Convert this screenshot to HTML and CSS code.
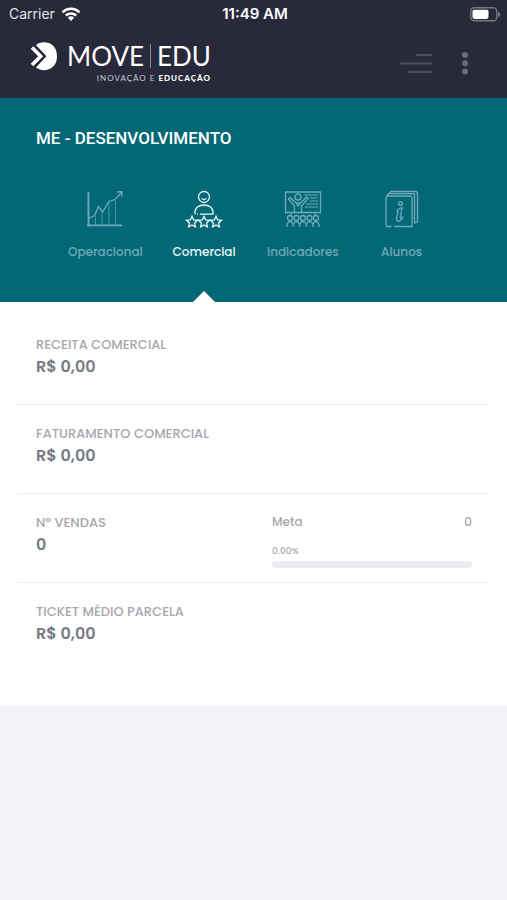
FILE: index.html
```html
<!DOCTYPE html>
<html lang="pt-BR">
<head>
<meta charset="utf-8">
<meta name="viewport" content="width=device-width, initial-scale=1">
<title>Move Edu</title>
<link rel="stylesheet" href="styles.css">
</head>
<body>
<div class="status">
  <div class="carrier">Carrier
    <svg width="20" height="14" viewBox="0 0 20 14" fill="none" stroke="#fff" stroke-width="2.5"><path d="M1.500 5.300a12.200 12.200 0 0 1 17 0M4.800 8.500a7.500 7.500 0 0 1 10.400 0"/><path d="M10 14 6.900 10.800a4.500 4.500 0 0 1 6.200 0z" fill="#fff" stroke="none"/></svg>
  </div>
  <time class="clock">11:49 AM</time>
  <svg class="battery" width="31" height="15" viewBox="0 0 31 15"><rect x=".75" y=".75" width="26" height="13" rx="3.5" fill="none" stroke="#777684" stroke-width="1.3"/><rect x="2.5" y="2.7" width="16" height="9.2" rx="1.8" fill="#fff"/><path d="M28 4.700c3 1 3 4.500 0 5.500z" fill="#777684"/></svg>
</div>
<header class="header">
  <a class="logo" href="#" aria-label="Move Edu">
    <svg class="mark" width="27" height="29" viewBox="0 0 27 29"><path d="M5.500 3.500C12-2.500 27-.5 27 14.200S12 31 5.500 25l10.800-10.800z" fill="#fff"/><path d="m2 5.500 8.700 8.700L2 23" fill="none" stroke="#fff" stroke-width="3.600"/><path d="m4 2.500 11 11.700L4 26" fill="none" stroke="#28293b" stroke-width="1.900"/></svg>
    <span class="brand">
      <span class="name"><span>MOVE</span><i class="bar"></i><span>EDU</span></span>
      <span class="tagline">INOVAÇÃO E <b>EDUCAÇÃO</b></span>
    </span>
  </a>
  <div class="actions">
    <button type="button" aria-label="Menu"><svg width="32" height="21" viewBox="0 0 32 21" stroke="#4d4d60" stroke-width="2"><path d="M16 2h16M0 10.500h32M8 19h24"/></svg></button>
    <button type="button" aria-label="Opções"><svg width="8" height="24" viewBox="0 0 8 24" fill="#6c6c7e"><circle cx="4" cy="4" r="3"/><circle cx="4" cy="12.300" r="3"/><circle cx="4" cy="20.600" r="3"/></svg></button>
  </div>
</header>
<main>
  <section class="hero">
    <h1>ME - DESENVOLVIMENTO</h1>
    <nav class="tabs">
      <a href="#"><svg width="38" height="38" viewBox="0 0 38 38"><path d="M2.500 2v34.500M1 35.300h35" stroke-width="1.800"/><path d="m2.500 28.500 6-3 4-9 4 5.500 6.500-10.500 6-2L36 2M31 2l5-.3-.3 5"/><path d="M9.500 26v9M16 23v12M23 13v22M29.500 10v25" stroke-width=".7"/><path d="M1 8h2M1 14h2M1 20h2M1 26h2" stroke-width=".8"/></svg><span>Operacional</span></a>
      <a href="#" class="active" aria-current="page"><svg width="38" height="38" viewBox="0 0 38 38"><circle cx="19" cy="7" r="5.500"/><path d="M16.500 8.500q2.500 2 5 0M10 24.200v-2c0-9.600 18-9.600 18 0v2H15M12 24.200h1"/><path id="star" d="m7 26.300 1.600 3.500 3.900.5-2.900 2.700.8 3.900L7 35l-3.400 1.900.8-3.900-2.900-2.700 3.900-.5z"/><use href="#star" x="12"/><use href="#star" x="24"/></svg><span>Comercial</span></a>
      <a href="#"><svg width="38" height="38" viewBox="0 0 38 38"><path d="M6 22.500H1.500V2h35v20.500H31"/><circle cx="14" cy="7" r="3"/><path d="M10.500 22v-6L4.500 9l1.500-1.500 6 5.500h4.500l6-6L24 8.500l-6.500 7.500v6M12 13l2 3 2.500-3M7 26v-3.500h24V26"/><path d="M20.500 5H34M25.500 8H34M26 11h8M22 14h12M21 17h13" stroke-width="1"/><circle cx="6" cy="28" r="2.500"/><circle cx="12.500" cy="28" r="2.500"/><circle cx="19" cy="28" r="2.500"/><circle cx="25.500" cy="28" r="2.500"/><circle cx="32" cy="28" r="2.500"/><path d="M3 37v-3q3-5 6.200 0 3.200-5 6.500 0 3.300-5 6.600 0 3.200-5 6.500 0 3.200-5 6.200 0v3M9.200 34v3M15.700 34v3M22.300 34v3M28.800 34v3"/></svg><span>Indicadores</span></a>
      <a href="#"><svg width="38" height="38" viewBox="0 0 38 38"><path d="M8.500 36.500H4.300Q3 36.500 3 35V7.500Q3 6 4.500 6h23Q29 6 29 7.500v29H11M3.200 6.500 8 1.500h24.500q2 0 2 2V32l-3.500 1"/><path d="M7 3.700h24.500V33"/><circle cx="17.500" cy="13.500" r="1.900"/><path d="M14 21q2-3.500 5-3.200l-1.600 9.200q-.3 2 2.100.3-1.500 4.200-4.500 4-1.800-.5-1.300-3l1.300-6.300z"/></svg><span>Alunos</span></a>
    </nav>
  </section>
  <section class="panel">
    <div class="row"><dl><dt>RECEITA COMERCIAL</dt><dd>R$ 0,00</dd></dl></div>
    <div class="row"><dl><dt>FATURAMENTO COMERCIAL</dt><dd>R$ 0,00</dd></dl></div>
    <div class="row">
      <dl><dt>Nº VENDAS</dt><dd>0</dd></dl>
      <div class="goal">
        <div class="goal-head"><span>Meta</span><span>0</span></div>
        <div class="percent">0.00%</div>
        <div class="track" role="progressbar" aria-label="Meta" aria-valuenow="0" aria-valuemin="0" aria-valuemax="100"></div>
      </div>
    </div>
    <div class="row"><dl><dt>TICKET MÉDIO PARCELA</dt><dd>R$ 0,00</dd></dl></div>
  </section>
</main>
</body>
</html>
```
FILE: styles.css
```css
* { box-sizing: border-box; }
body {
  margin: 0;
  background: #f0f2f6;
  color: #a7a8ae;
  font: 500 13px/22px Poppins, Inter, sans-serif;
}
a { color: inherit; text-decoration: none; }
svg { display: block; flex: none; }
dl, dd, h1 { margin: 0; }

.status {
  display: grid;
  grid-template-columns: 1fr auto 1fr;
  align-items: center;
  padding: 0 6px 0 9px;
  height: 28px;
  background: #28293b;
  color: #fff;
  font: 14px/20px Inter, sans-serif;
}
.carrier { display: flex; align-items: center; gap: 6px; color: #e4e4ea; }
.clock { font-size: 15px; font-weight: 600; }
.battery { justify-self: end; }

.header {
  display: flex;
  justify-content: space-between;
  height: 70px;
  padding: 14px 38px 0 30px;
  background: #28293b;
}
.logo { display: flex; gap: 10px; color: #fff; }
.brand { display: flex; flex-direction: column; align-items: flex-end; }
.name {
  display: flex;
  align-items: center;
  gap: 6px;
  font: 26px/28px Lato, sans-serif;
}
.bar { width: 1px; height: 24px; background: #8b8b98; }
.tagline {
  color: #c8c8d2;
  font: 8px/16px Lato, sans-serif;
  letter-spacing: 1px;
}
.tagline b { color: #fff; font-weight: 900; }
.actions { display: flex; align-items: center; gap: 29px; height: 42px; }
.actions button { padding: 0; border: 0; background: none; cursor: pointer; }

.hero { background: #036876; color: #fff; }
.hero h1 {
  padding: 28px 36px 0;
  font: 500 17px/24px Roboto, sans-serif;
}
.tabs {
  display: grid;
  grid-template-columns: repeat(4, 1fr);
  padding: 40px 56px 0;
  font-size: 12px;
}
.tabs a {
  position: relative;
  display: flex;
  flex-direction: column;
  align-items: center;
  gap: 13px;
  height: 112px;
  color: #70a9b9;
}
.tabs svg { fill: none; stroke: currentColor; stroke-width: 1.3; }
.tabs .active { color: #e9f6f7; }
.tabs .active::after {
  content: "";
  position: absolute;
  bottom: 0;
  border: 11px solid transparent;
  border-top: 0;
  border-bottom-color: #fff;
}

.panel {
  padding: 14px 17px 34px 18px;
  background: #fff;
  box-shadow: 0 14px 12px -8px #e9ebef;
}
.row {
  display: grid;
  grid-template-columns: 1fr 1fr;
  gap: 36px;
  min-height: 89px;
  padding: 18px 18px 13px;
  border-bottom: 1px solid #ededf0;
}
.row:last-child { border-bottom: 0; }
.row dd {
  color: #787984;
  font-size: 16px;
  font-weight: 600;
}
.goal-head { display: flex; justify-content: space-between; font-size: 12px; line-height: 20px; }
.percent { margin-top: 11px; font-size: 9px; line-height: 16px; }
.track { height: 7px; margin-top: 2px; border-radius: 4px; background: #ebecf0; }
```
